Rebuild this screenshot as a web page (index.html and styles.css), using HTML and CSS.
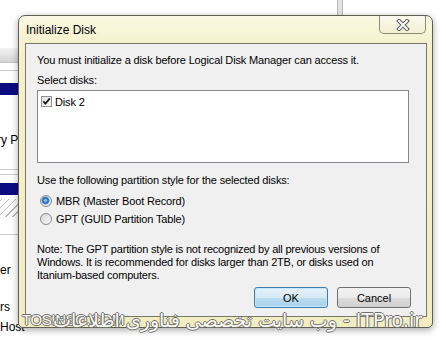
FILE: index.html
```html
<!DOCTYPE html>
<html lang="en">
<head>
    <meta charset="UTF-8">
    <meta name="viewport" content="width=device-width, initial-scale=1.0">
    <title>Initialize Disk</title>
    <link rel="stylesheet" href="styles.css">
</head>
<body>
    <!-- the window behind the dialog, only its left strip shows -->
    <div class="backwin">
        <div class="bw-toolbar"></div>
        <div class="bw-rule"></div>
        <div class="bw-sel"></div>
        <div class="bw-text bw-prop">ry P</div>
        <div class="bw-double"></div>
        <div class="bw-sel bw-sel2"></div>
        <div class="bw-hatch"></div>
        <div class="bw-rule bw-rule3"></div>
        <div class="bw-text bw-er">er</div>
        <div class="bw-text bw-rs">rs</div>
        <div class="bw-text bw-host">Host</div>
    </div>
    <div class="backedge"></div>

    <div class="dialog">
        <div class="titlebar">
            <span class="title">Initialize Disk</span>
            <button class="close" aria-label="Close">
                <svg width="14" height="12" viewBox="0 0 14 12">
                    <path d="M3 2 L11 10 M11 2 L3 10" stroke="#5b5b5b" stroke-width="4" stroke-linecap="square" fill="none"/>
                    <path d="M3 2 L11 10 M11 2 L3 10" stroke="#fdfdfd" stroke-width="2" stroke-linecap="square" fill="none"/>
                </svg>
            </button>
        </div>
        <div class="client">
            <p class="msg">You must initialize a disk before Logical Disk Manager can access it.</p>
            <p class="label">Select disks:</p>
            <div class="listbox">
                <div class="item">
                    <span class="check">
                        <svg width="9" height="9" viewBox="0 0 9 9">
                            <path d="M1.3 4.3 L3.5 6.6 L7.8 1.4" stroke="#1a1a1a" stroke-width="1.7" fill="none"/>
                        </svg>
                    </span>
                    Disk 2
                </div>
            </div>
            <p class="label label-style">Use the following partition style for the selected disks:</p>
            <div class="radios">
                <div class="radio-row"><span class="radio on"></span>MBR (Master Boot Record)</div>
                <div class="radio-row"><span class="radio"></span>GPT (GUID Partition Table)</div>
            </div>
            <p class="note">Note: The GPT partition style is not recognized by all previous versions of<br>Windows. It is recommended for disks larger than 2TB, or disks used on<br>Itanium-based computers.</p>
            <div class="actions">
                <button class="btn default">OK</button>
                <button class="btn">Cancel</button>
            </div>
        </div>
    </div>

    <div class="watermark">
        <span class="wm-left">TOSINSO.COM</span>
        <span class="wm-right" dir="rtl">ITPro.ir - وب سایت تخصصی فناوری اطلاعات</span>
    </div>
</body>
</html>
```

FILE: styles.css
```css
body {
    margin: 0;
    width: 446px;
    height: 340px;
    position: relative;
    overflow: hidden;
    background-color: #fff;
    font-family: "Liberation Sans", Arial, sans-serif;
    color: #000;
}

/* window behind */
.backwin {
    position: absolute;
    left: 0;
    top: 0;
    width: 40px;
    height: 340px;
    font-size: 12px;
}

.bw-toolbar {
    margin-top: 48px;
    height: 14px;
    background: linear-gradient(#f4f4f4, #d4d4d4);
    border-bottom: 1px solid #c2c2c2;
}

.bw-rule {
    margin-top: 7px;
    border-top: 1px solid #cacaca;
}

.bw-sel {
    margin-top: 12px;
    height: 12px;
    background-color: #0c0c82;
}

.bw-text {
    line-height: 14px;
    white-space: nowrap;
}

.bw-prop {
    margin-top: 38px;
    margin-left: -3px;
}

.bw-double {
    margin-top: 22px;
    height: 4px;
    border-top: 1px solid #cacaca;
    border-bottom: 1px solid #cacaca;
}

.bw-sel2 {
    margin-top: 8px;
}

.bw-hatch {
    margin-top: 4px;
    height: 18px;
    background: repeating-linear-gradient(-45deg, #fff 0 4px, #b8b8b8 4px 5px);
}

.bw-rule3 {
    margin-top: 17px;
}

.bw-er {
    margin-top: 28px;
}

.bw-rs {
    margin-top: 23px;
}

.bw-host {
    margin-top: 6px;
}

.backedge {
    position: absolute;
    left: 337px;
    top: 0;
    width: 4px;
    height: 15px;
    background-color: #e4e4e4;
    border-left: 1px solid #b9b9b9;
    border-right: 1px solid #b9b9b9;
}

/* dialog */
.dialog {
    position: absolute;
    left: 18px;
    top: 15px;
    z-index: 1;
    width: 415px;
    height: 313px;
    box-sizing: border-box;
    padding: 0 5px 10px 6px;
    border: 1px solid #5f5f55;
    border-radius: 7px 7px 5px 5px;
    background: linear-gradient(#faf8e4, #f5f1cc 30px, #f1edc1);
    box-shadow: 0 2px 7px rgba(0, 0, 0, 0.35);
    display: flex;
    flex-direction: column;
}

.titlebar {
    height: 27px;
    display: flex;
    justify-content: space-between;
    align-items: flex-start;
}

.title {
    padding: 7px 0 0 1px;
    font-size: 12px;
    line-height: 14px;
}

.close {
    width: 47px;
    height: 18px;
    margin-right: 1px;
    padding: 0;
    border: 1px solid #8e8c76;
    border-top: none;
    border-radius: 0 0 5px 5px;
    background: linear-gradient(#fbfaef, #f2efd1);
    display: flex;
    justify-content: center;
    align-items: center;
}

.client {
    flex: 1;
    border: 1px solid #77776a;
    background-color: #f0f0f0;
    padding: 9px 15px 0 11px;
    font-size: 11px;
    letter-spacing: -0.15px;
    line-height: 14px;
    display: flex;
    flex-direction: column;
}

.client p {
    margin: 0;
}

.label {
    margin-top: 6px !important;
}

.listbox {
    margin-top: 3px;
    margin-right: 2px;
    height: 73px;
    box-sizing: border-box;
    border: 1px solid #828790;
    background-color: #fff;
}

.item {
    display: flex;
    align-items: center;
    height: 11px;
    margin-top: 5px;
    padding-left: 3px;
}

.check {
    width: 11px;
    height: 11px;
    box-sizing: border-box;
    margin-right: 3px;
    border: 1px solid #8f8f8f;
    background: linear-gradient(135deg, #dedede, #fff);
    display: flex;
    justify-content: center;
    align-items: center;
}

.label-style {
    margin-top: 10px !important;
}

.radios {
    margin-top: 5px;
}

.radio-row {
    height: 18px;
    display: flex;
    align-items: center;
}

.radio {
    width: 12px;
    height: 12px;
    box-sizing: border-box;
    margin: 0 4px 0 3px;
    border: 1px solid #8a8a8a;
    border-radius: 50%;
    background: linear-gradient(135deg, #d4d4d4, #fafafa);
}

.radio.on {
    background: radial-gradient(circle at 45% 45%, #7fc0f4 0 1px, #1f5fae 2.5px, #4f8dcf 3.5px, #eef2f6 4.5px, #d8d8d8 6px);
}

.note {
    margin-top: 15px !important;
    line-height: 13px;
    letter-spacing: -0.2px;
}

.actions {
    margin-top: 5px;
    display: flex;
    justify-content: flex-end;
    gap: 9px;
}

.btn {
    width: 74px;
    height: 21px;
    padding: 0;
    border: 1px solid #707070;
    border-radius: 3px;
    background: linear-gradient(#f2f2f2, #ebebeb 50%, #dddddd 51%, #cfcfcf);
    font-family: inherit;
    font-size: 11px;
    color: #000;
}

.btn.default {
    border-color: #3c7fb1;
    background: linear-gradient(#e6f2fa, #d5e9f6 50%, #bddcf0 51%, #a9d1ea);
    box-shadow: inset 0 0 0 1px #c8e6f8;
}

/* watermark over the bottom frame */
.watermark {
    position: absolute;
    left: 0;
    top: 308px;
    z-index: 2;
    width: 446px;
    height: 26px;
}

.wm-left,
.wm-right {
    position: absolute;
    white-space: nowrap;
    color: #fbfbf4;
    text-shadow: -1px 0 #707070, 1px 0 #707070, 0 -1px #707070, 0 1px #707070;
}

.wm-left {
    left: 22px;
    top: 3px;
    font-size: 15px;
    line-height: 18px;
    letter-spacing: -0.4px;
}

.wm-right {
    right: 24px;
    top: 1px;
    font-family: "DejaVu Sans", sans-serif;
    font-size: 19px;
    line-height: 22px;
}
```
